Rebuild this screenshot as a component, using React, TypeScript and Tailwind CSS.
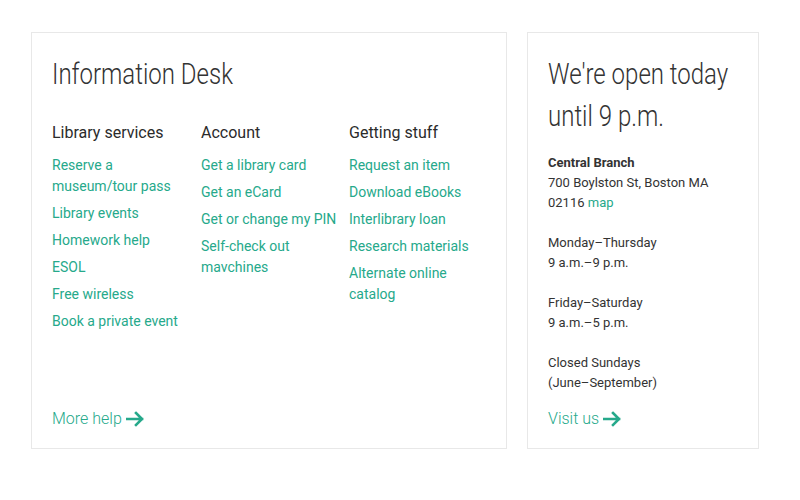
import React from "react";

const columns = [
  {
    title: "Library services",
    links: ["Reserve a museum/tour pass", "Library events", "Homework help", "ESOL", "Free wireless", "Book a private event"],
  },
  {
    title: "Account",
    links: ["Get a library card", "Get an eCard", "Get or change my PIN", "Self-check out mavchines"],
  },
  {
    title: "Getting stuff",
    links: ["Request an item", "Download eBooks", "Interlibrary loan", "Research materials", "Alternate online catalog"],
  },
];

const Arrow = () => (
  <svg width="19" height="16" viewBox="0 0 19 16" fill="none" className="ml-[4px]">
    <path d="M1 8h15M10 2l6 6-6 6" stroke="#26a98b" strokeWidth="2.6" strokeLinecap="square" />
  </svg>
);

export default function App() {
  return (
    <div className="min-h-[500px] w-[800px] bg-white pl-[31px] pt-[32px] font-['Roboto',sans-serif] text-[#333]">
      <div className="flex gap-[20px]">
        {/* Information desk */}
        <div className="flex h-[417px] w-[476px] flex-col border border-[#e8e8e8] px-[20px] pt-[23px] pb-[17px]">
          {/* condensed light heading */}
          <h1 className="w-[430px] origin-left scale-x-[0.8] text-[30px] font-light leading-[36px]">Information Desk</h1>
          <div className="mt-[30px] grid grid-cols-[149px_148px_1fr]">
            {columns.map((col) => (
              <div key={col.title} className="pr-[6px]">
                <h2 className="text-[16px] leading-[22px] text-[#2b2b2b]">{col.title}</h2>
                <ul className="mt-[11px] flex flex-col gap-[6px]">
                  {col.links.map((l) => (
                    <li key={l} className="text-[14px] leading-[21px] text-[#26a98b]">
                      {l}
                    </li>
                  ))}
                </ul>
              </div>
            ))}
          </div>
          <a className="mt-auto flex items-center text-[16px] font-light leading-[24px] text-[#26a98b]">
            More help
            <Arrow />
          </a>
        </div>

        {/* Hours */}
        <div className="flex h-[417px] w-[232px] flex-col border border-[#e8e8e8] px-[20px] pt-[20px] pb-[17px]">
          <h1 className="w-[190px] text-[30px] font-light leading-[42px]">
            <span className="block w-[236px] origin-left scale-x-[0.8]">We're open today until 9 p.m.</span>
          </h1>
          <div className="mt-[16px] flex flex-col gap-[20px] text-[13px] leading-[20px]">
            <p>
              <span className="font-bold">Central Branch</span>
              <br />
              700 Boylston St, Boston MA
              <br />
              02116 <span className="text-[#26a98b]">map</span>
            </p>
            <p>
              Monday–Thursday
              <br />
              9 a.m.–9 p.m.
            </p>
            <p>
              Friday–Saturday
              <br />
              9 a.m.–5 p.m.
            </p>
            <p>
              Closed Sundays
              <br />
              (June–September)
            </p>
          </div>
          <a className="mt-auto flex items-center text-[16px] font-light leading-[24px] text-[#26a98b]">
            Visit us
            <Arrow />
          </a>
        </div>
      </div>
    </div>
  );
}
